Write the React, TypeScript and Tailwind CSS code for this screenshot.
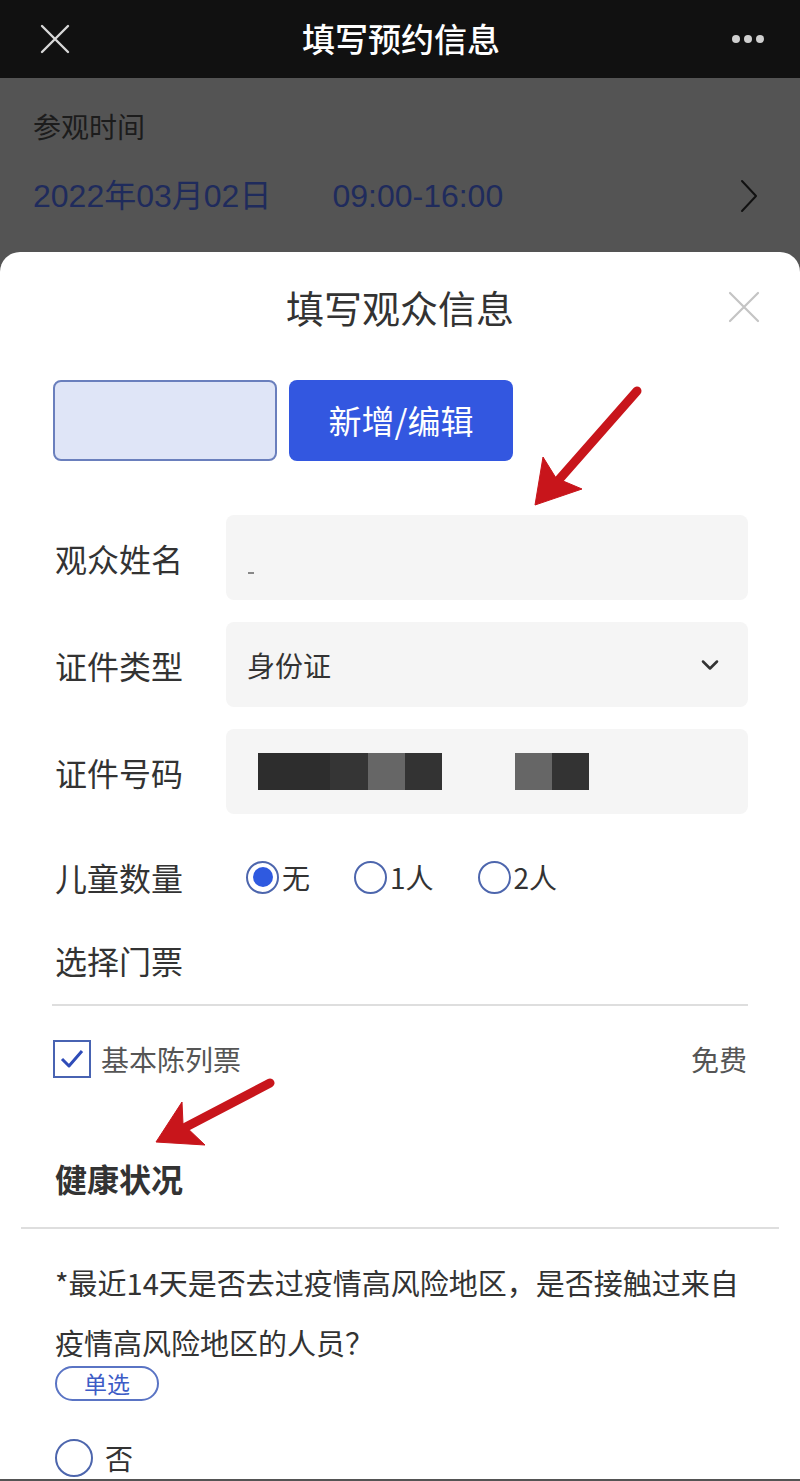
import { ChevronDown } from "lucide-react";

const font = { fontFamily: '"Noto Sans CJK SC", "Noto Sans", sans-serif' };

function Radio({ checked, big }: { checked?: boolean; big?: boolean }) {
  return (
    <span
      className={
        "flex shrink-0 items-center justify-center rounded-full border-2 border-[#4d66ad] bg-white " +
        (big ? "h-[38px] w-[38px]" : "h-[33px] w-[33px]")
      }
    >
      {checked && <span className="h-[20px] w-[20px] rounded-full bg-[#2f5ae0]" />}
    </span>
  );
}

function Arrow({ d }: { d: string }) {
  return <path d={d} fill="#c8151b" stroke="#c8151b" strokeLinejoin="round" strokeWidth="1" />;
}

export default function App() {
  const childOpts = [
    { label: "无", checked: true },
    { label: "1人" },
    { label: "2人" },
  ];

  return (
    <div className="relative w-[800px] h-[1481px] overflow-hidden bg-[#545454]" style={font}>
      {/* top bar */}
      <header className="flex h-[78px] items-center justify-between bg-[#111111] pl-[40px] pr-[36px]">
        <svg width="30" height="30" viewBox="0 0 30 30">
          <path d="M2 2 L28 28 M28 2 L2 28" stroke="#d8d8d8" strokeWidth="2.4" strokeLinecap="round" />
        </svg>
        <h1 className="text-[33px] font-medium text-white">填写预约信息</h1>
        <div className="flex gap-[4px]">
          <span className="h-[8px] w-[8px] rounded-full bg-[#cfcfcf]" />
          <span className="h-[8px] w-[8px] rounded-full bg-[#cfcfcf]" />
          <span className="h-[8px] w-[8px] rounded-full bg-[#cfcfcf]" />
        </div>
      </header>

      {/* dimmed page */}
      <section className="h-[174px] px-[33px] pt-[30px]">
        <p className="text-[28px] leading-[36px] text-[#1c1c1c]">参观时间</p>
        <div className="mt-[26px] flex items-center justify-between">
          <div
            className="flex gap-[61px] text-[32px] leading-[52px] text-[#1f2b5c]"
            style={{ fontFamily: '"Liberation Sans", "Noto Sans CJK SC", sans-serif' }}
          >
            <span>2022年03月02日</span>
            <span>09:00-16:00</span>
          </div>
          <svg className="mr-[9px]" width="18" height="34" viewBox="0 0 18 34">
            <path d="M2 2 L16 17 L2 32" fill="none" stroke="#111" strokeWidth="2" strokeLinecap="round" strokeLinejoin="round" />
          </svg>
        </div>
      </section>

      {/* sheet */}
      <section className="rounded-t-[20px] bg-white">
        <div className="relative flex h-[108px] items-center justify-center">
          <h2 className="text-[38px] text-[#333]">填写观众信息</h2>
          <svg className="absolute right-[40px] top-[39px]" width="32" height="32" viewBox="0 0 32 32">
            <path d="M2 2 L30 30 M30 2 L2 30" stroke="#c4c4c4" strokeWidth="2.2" strokeLinecap="round" />
          </svg>
        </div>

        <div className="mt-[20px] flex gap-[12px] px-[53px]">
          <div className="h-[81px] w-[224px] rounded-[8px] border-2 border-[#6a7fbd] bg-[#dfe5f7]" />
          <button className="h-[81px] w-[224px] rounded-[8px] bg-[#3357e0] text-[33px] text-white">
            新增/编辑
          </button>
        </div>

        <div className="mt-[54px] flex flex-col gap-[22px] pl-[55px] pr-[52px]">
          <div className="flex items-center">
            <span className="w-[171px] text-[32px] text-[#333]">观众姓名</span>
            <div className="flex h-[85px] flex-1 items-center rounded-[8px] bg-[#f5f5f5] pl-[22px]">
              <span className="mt-[30px] h-[2px] w-[6px] bg-[#888]" />
            </div>
          </div>
          <div className="flex items-center">
            <span className="w-[171px] text-[32px] text-[#333]">证件类型</span>
            <div className="flex h-[85px] flex-1 items-center justify-between rounded-[8px] bg-[#f5f5f5] pl-[21px] pr-[24px]">
              <span className="text-[28px] text-[#333]">身份证</span>
              <ChevronDown size={28} strokeWidth={2.2} className="text-[#333]" />
            </div>
          </div>
          <div className="flex items-center">
            <span className="w-[171px] text-[32px] text-[#333]">证件号码</span>
            <div className="flex h-[85px] flex-1 items-center rounded-[8px] bg-[#f5f5f5] pl-[32px]">
              <div className="flex h-[37px]">
                <span className="w-[72px] bg-[#2d2d2d]" />
                <span className="w-[38px] bg-[#353535]" />
                <span className="w-[37px] bg-[#666]" />
                <span className="w-[37px] bg-[#333]" />
                <span className="w-[73px] bg-[#f5f5f5]" />
                <span className="w-[37px] bg-[#666]" />
                <span className="w-[37px] bg-[#333]" />
              </div>
            </div>
          </div>
        </div>

        <div className="mt-[33px] flex h-[60px] items-center pl-[55px]">
          <span className="w-[191px] text-[32px] text-[#333]">儿童数量</span>
          <div className="flex gap-[44px]">
            {childOpts.map((o) => (
              <label key={o.label} className="flex items-center gap-[3px] text-[28px] text-[#333]">
                <Radio checked={o.checked} />
                <span>{o.label}</span>
              </label>
            ))}
          </div>
        </div>

        <div className="mt-[23px] flex h-[60px] items-center pl-[55px]">
          <span className="text-[32px] text-[#333]">选择门票</span>
        </div>

        <div className="mx-[52px] mt-[14px] border-t-2 border-[#dedede]" />

        <div className="mt-[32px] flex items-center justify-between pl-[53px] pr-[53px]">
          <div className="flex items-center gap-[10px]">
            <span className="flex h-[38px] w-[38px] items-center justify-center border-2 border-[#4863b2]">
              <svg width="26" height="22" viewBox="0 0 26 22">
                <path d="M3 11 L10 18 L23 3" fill="none" stroke="#2f4cb8" strokeWidth="3" strokeLinejoin="round" />
              </svg>
            </span>
            <span className="text-[28px] text-[#555]">基本陈列票</span>
          </div>
          <span className="text-[28px] text-[#555]">免费</span>
        </div>

        <div className="mt-[76px] pl-[55px]">
          <h3 className="text-[32px] font-bold leading-[44px] text-[#333]">健康状况</h3>
        </div>

        <div className="mx-[21px] mt-[27px] border-t-2 border-[#dedede]" />

        <div className="mt-[23px] px-[55px] pr-[52px]">
          <p className="text-[29px] leading-[60px] text-[#333]">
            *最近14天是否去过疫情高风险地区，是否接触过来自疫情高风险地区的人员？
          </p>
          <span className="-mt-[6px] flex h-[35px] w-[104px] items-center justify-center rounded-full border-2 border-[#5a74c4] text-[23px] text-[#3d5cc6]">
            单选
          </span>
          <label className="mt-[36px] flex items-center gap-[12px] text-[28px] text-[#333]">
            <Radio big />
            <span>否</span>
          </label>
        </div>
      </section>

      {/* annotation arrows */}
      <svg className="pointer-events-none absolute left-0 top-0" width="800" height="1481">
        <path d="M637 391 L556 483" stroke="#c8151b" strokeWidth="9" strokeLinecap="round" />
        <Arrow d="M535 505 L543 457 L556 478 L582 489 Z" />
        <path d="M270 1083 L184 1128" stroke="#c8151b" strokeWidth="9" strokeLinecap="round" />
        <Arrow d="M156 1142 L182 1102 L183 1124 L205 1145 Z" />
      </svg>
    </div>
  );
}
